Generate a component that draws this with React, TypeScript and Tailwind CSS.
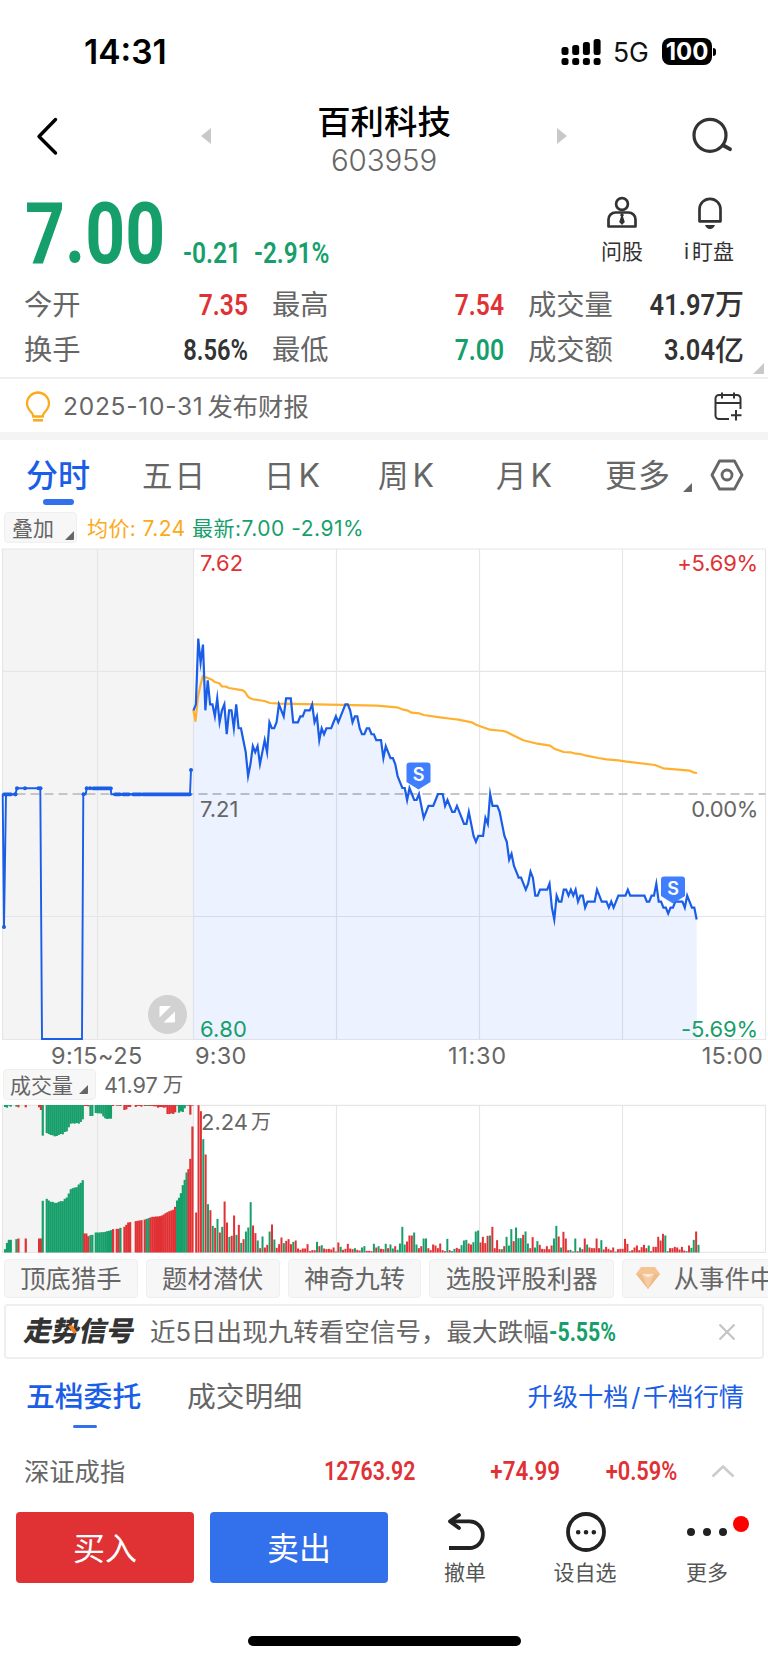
import type { ReactNode } from "react";
import clsx from "clsx";

// One value per minute, in ticks of 0.01 away from the previous close (7.21)
const TICKS = [
  14, 15, 26, 22, 25, 14, 19, 15, 15, 13, 16, 12, 14, 15, 10, 14, 14, 11, 15, 11,
  11, 9, 7, 3, 5, 8, 7, 8, 5, 7, 9, 7, 12, 11, 11, 12, 15, 14, 13, 16,
  16, 16, 12, 12, 12, 13, 13, 14, 14, 14, 15, 12, 13, 9, 11, 10, 11, 11, 11, 12,
  13, 12, 13, 14, 15, 15, 14, 12, 13, 13, 11, 10, 10, 11, 11, 10, 10, 9, 9, 9,
  6, 8, 7, 6, 6, 5, 3, 2, 1, 1, -1, 1, 0, -1, -1, 0, -2, -4, -3, -2,
  -2, -2, -1, 0, 0, 0, -2, -1, -2, -3, -3, -2, -3, -4, -5, -5, -3, -5, -7, -8,
  -7, -7, -7, -4, -5, 0, -2, -2, -2, -3, -5, -7, -8, -11, -10, -12, -13, -14, -14, -15,
  -16, -15, -13, -14, -17, -17, -16, -16, -16, -16, -15, -19, -21, -17, -18, -18, -16, -16, -17, -16,
  -17, -16, -18, -17, -17, -19, -18, -18, -18, -18, -16, -17, -18, -18, -18, -19, -18, -19, -18, -17,
  -17, -17, -17, -16, -17, -17, -17, -17, -17, -17, -17, -18, -18, -17, -17, -15, -18, -18, -19, -19,
  -20, -19, -19, -18, -18, -18, -18, -19, -17, -18, -19, -19, -21,
];

// Positive = red bar, negative = green bar
const VOLUME = [
  120, 442, 424, -340, 294, -145, 127, -80, 74, -101, 60, -77, 153, 90, -47, 50, 111, -53, 83, -29,
  40, -63, -75, -151, 81, 58, -36, 13, -48, 15, 23, -63, 84, -39, 14, 25, 45, -28, 35, 40,
  25, -32, 36, 12, 8, 12, 12, 25, 4, 7, 7, -32, 19, -22, 12, 10, 11, 9, 15, -3,
  30, -17, 8, 11, 26, 12, 10, -13, 8, 6, -15, -19, 5, 5, 4, -26, 15, -19, 11, 10,
  -26, 13, -24, -12, 19, -8, -27, -77, -24, 33, 51, 51, -60, -24, 13, 19, -42, -42, 13, 7,
  24, 21, 13, 27, 7, 4, -41, 7, -4, -11, 14, 11, -22, -36, -38, 27, 24, -31, -63, -66,
  30, 47, 28, 50, -51, 77, 13, 37, 10, -10, 19, -47, -21, -70, 34, -75, -43, -43, 53, -63,
  -27, 13, 46, -15, -34, 23, 11, 10, 19, 10, 21, -42, -80, 48, -15, 62, 42, 7, -8, 3,
  -42, 4, -15, 10, 42, -24, 15, 13, 13, 42, 13, -37, 9, 17, 11, 7, 15, -3, 10, 11,
  11, 41, 26, -4, 7, 15, 21, 7, 16, 23, 13, -21, 4, 17, 17, 47, 36, 56, -51, -4,
  13, 13, 17, 15, 9, 17, 6, -4, 21, -14, -38, 63, -23,
];

const AVERAGE =
  "193.3,162 195.5,173 198,148.7 200.3,138 202.7,128 205,129 212,131.7 214.7,134 219.3,135.3 221.7,138.3 226.3,138.7 229,140 243,142.3 245.3,144.3 247.7,148.3 250.3,150.3 253.3,151.3 264.3,153 270,155 280,155.7 376.7,157.7 396.7,159.3 402.3,161.3 407,162.3 411.7,164.7 419,165.3 423.7,167 440,169.3 453,171 458.3,171.7 471.7,174.3 476,176.7 490,181.7 503.3,183 506.7,184 523.3,192.3 537.3,195.7 550,197.7 554.3,200.7 563.7,204 570.7,204.3 575.7,205.7 580,206 585,207.3 598.3,210 606.7,211.3 618.3,212.3 626.7,213.7 655,217 663.3,220.3 690,222.7 694.3,224.7 697,225";

type AuctionRun = { x: number; up: boolean; bid: number[]; rest: number[] };

// Call auction bars: `bid` grows from the bottom, `rest` hangs from the top
const AUCTION: AuctionRun[] = [
  { x: 15, up: false, bid: [10, 29, 38, 38], rest: [6, 8, 2, 5] },
  { x: 49, up: false, bid: [40], rest: [5] },
  { x: 55, up: true, bid: [42], rest: [7] },
  { x: 77, up: true, bid: [42], rest: [7] },
  { x: 117, up: true, bid: [42, 42], rest: [7, 15] },
  { x: 128, up: false, bid: [155], rest: [92] },
  {
    x: 140,
    up: false,
    bid: [161, 156, 152, 152, 149, 149, 152, 154, 154, 161, 165, 177, 190, 193, 195, 196, 204, 209, 217],
    rest: [84, 87, 90, 91, 94, 93, 90, 87, 88, 81, 79, 67, 56, 55, 56, 54, 56, 51, 43],
  },
  { x: 253, up: true, bid: [57, 57, 49], rest: [3, 3, 4] },
  { x: 271, up: false, bid: [52, 53], rest: [33, 33] },
  { x: 287, up: false, bid: [60, 60, 60, 61, 61, 62, 64, 65, 67], rest: [24, 25, 25, 26, 34, 40, 42, 41, 41] },
  { x: 339, up: true, bid: [70], rest: [3] },
  { x: 350, up: true, bid: [71, 71], rest: [2, 2] },
  { x: 361, up: false, bid: [74], rest: [3] },
  { x: 373, up: true, bid: [77, 83, 90, 91], rest: [15, 13, 6, 6] },
  { x: 407, up: true, bid: [94, 95, 96, 97], rest: [6, 3, 3, 5] },
  { x: 434, up: true, bid: [99], rest: [3] },
  { x: 440, up: false, bid: [101, 103], rest: [3, 3] },
  {
    x: 451,
    up: true,
    bid: [105, 107, 107, 108, 108, 109, 111, 114, 118, 121, 124, 126, 128, 137],
    rest: [3, 3, 4, 4, 8, 6, 6, 8, 7, 27, 27, 25, 27, 22],
  },
  { x: 531, up: false, bid: [156, 164, 178, 202, 218, 240], rest: [2, 23, 19, 21, 10, 2] },
  { x: 565, up: true, bid: [250, 281], rest: [2, 29] },
  { x: 577, up: true, bid: [378], rest: [2] },
];

const RED = "#e03135";
const GREEN = "#179f6b";
const STEP = 572 / 241;
const minuteX = (i: number) => 193.5 + i * STEP;

const pricePoints = TICKS.map((t, i) => `${minuteX(i).toFixed(2)},${(246 - t * 5.977).toFixed(2)}`).join(" ");

function Num({ children, className }: { children: ReactNode; className?: string }) {
  return (
    <span className={clsx("inline-block whitespace-nowrap font-[Roboto,sans-serif] leading-none", className)}>
      {children}
    </span>
  );
}

function Corner({ className }: { className?: string }) {
  return (
    <svg className={clsx("shrink-0", className)} viewBox="0 0 10 10" preserveAspectRatio="none">
      <path d="M10 0v9a1 1 0 0 1-1 1H0Z" fill="currentColor" />
    </svg>
  );
}

function StatusBar() {
  return (
    <div className="flex h-[102px] items-center pt-[1px] pr-[52px] pl-[84px]">
      <span className="pt-[2px] text-[33.500px] font-semibold leading-none text-black">14:31</span>
      <svg className="ml-auto h-[28px] w-[40px]" viewBox="0 0 40 28">
        {[9, 7, 4, 1].map((top, i) => (
          <g key={i}>
            <rect x={0.5 + i * 10.7} y={top} width="7" height={17 - top} rx="2.5" />
            <rect x={0.5 + i * 10.7} y="20" width="7" height="7" rx="2.5" />
          </g>
        ))}
      </svg>
      <span className="ml-[12px] w-[38px] pt-[2px] text-[26.500px] leading-none text-[#111]">5G</span>
      <div className="ml-[11px] flex h-[27px] w-[50px] items-center justify-center rounded-[8px] bg-black text-[24px] font-bold leading-none text-white">
        100
      </div>
      <span className="ml-[1px] h-[8px] w-[3px] rounded-r-full bg-black" />
    </div>
  );
}

function Header() {
  return (
    <div className="flex h-[78px] items-start">
      <svg className="mt-[15px] ml-[35px] h-[39px] w-[24px]" viewBox="0 0 24 39" fill="none">
        <path d="M20.5 2.5 4 19.5l16.500 16.500" stroke="#000" strokeWidth="3.4" strokeLinecap="round" strokeLinejoin="round" />
      </svg>
      <svg className="mt-[26px] ml-[142px] h-[16px] w-[10px]" viewBox="0 0 10 16">
        <path d="M10 0v16L0 8Z" fill="#c8c8c8" />
      </svg>
      <div className="ml-[77px] flex w-[192px] flex-col items-center">
        <h1 className="mt-[1px] text-[33.400px] font-medium leading-[38px] text-black">百利科技</h1>
        <span className="text-[29.5px] font-light leading-[38px] tracking-[-0.1px] text-[#666]">603959</span>
      </div>
      <svg className="mt-[26px] ml-[77px] h-[16px] w-[10px]" viewBox="0 0 10 16">
        <path d="M0 0v16l10-8Z" fill="#c8c8c8" />
      </svg>
      <svg className="mt-[14px] ml-[124px] h-[42px] w-[42px]" viewBox="0 0 42 42" fill="none" stroke="#333" strokeWidth="3.2">
        <circle cx="19" cy="19.300" r="16" />
        <path d="M32.500 29.500 39 33.200" strokeWidth="3.800" strokeLinecap="round" />
      </svg>
    </div>
  );
}

function Quote() {
  return (
    <div className="flex h-[102px] items-start pl-[25px] text-[#179f6b]">
      <div className="w-[158px] pt-[11px]">
        <Num className="origin-left scale-x-[0.81] text-[86px] font-bold">7.00</Num>
      </div>
      <div className="w-[71px] pt-[58px]">
        <Num className="origin-left scale-x-[0.82] text-[30px] font-semibold">-0.21</Num>
      </div>
      <div className="pt-[58px]">
        <Num className="origin-left scale-x-[0.81] text-[30px] font-semibold">-2.91%</Num>
      </div>
      <div className="mr-[34px] ml-auto flex gap-[40px] text-[#333]">
        <div className="flex w-[44px] flex-col items-center pt-[16px]">
          <svg className="h-[34px] w-[32px]" viewBox="0 0 32 34" fill="none" stroke="#333" strokeWidth="2.700">
            <circle cx="16" cy="8" r="5.900" />
            <path d="M2.500 30.500v-7a7 7 0 0 1 7-7h13a7 7 0 0 1 7 7v7Z" strokeLinejoin="round" />
            <path d="m16 17 2 2-1 1.500 1.800 5.500L16 29l-2.800-3 1.800-5.500-1-1.500Z" fill="#333" stroke="none" />
          </svg>
          <span className="mt-[10px] whitespace-nowrap text-[21px] leading-[24px]">问股</span>
        </div>
        <div className="flex w-[50px] flex-col items-center pt-[16px]">
          <svg className="ml-[2px] h-[34px] w-[26px]" viewBox="0 0 26 34" fill="none" stroke="#333" strokeWidth="2.700">
            <path d="M2.500 25.300v-12a10.500 10.500 0 0 1 21 0v12Z" strokeLinejoin="round" />
            <path d="M8 29h10q-1.500 4-5 4t-5-4Z" fill="#333" stroke="none" />
          </svg>
          <span className="mt-[10px] whitespace-nowrap text-[21px] leading-[24px]">
            <span className="mr-[3px]">i</span>盯盘
          </span>
        </div>
      </div>
    </div>
  );
}

type StatProps = { label: string; value: string; unit?: string; color: string; squeeze?: string };

function Stat({ label, value, unit, color, squeeze = "scale-x-[0.82]" }: StatProps) {
  return (
    <div className="flex items-center justify-between">
      <span className="text-[28.300px] leading-none text-[#666]">{label}</span>
      <span className={clsx("flex items-center", color)}>
        <Num className={clsx("origin-right text-[30px] font-semibold", squeeze)}>{value}</Num>
        {unit && <span className="text-[29px] font-medium leading-none">{unit}</span>}
      </span>
    </div>
  );
}

function Stats() {
  return (
    <div className="flex h-[97px] border-b-2 border-[#efefef]">
      <div className="ml-[24px] grid h-[92px] w-[720px] grid-cols-[224px_232px_216px] content-start justify-between">
        <div className="grid auto-rows-[45.500px]">
          <Stat label="今开" value="7.35" color="text-[#e03135]" />
          <Stat label="换手" value="8.56%" color="text-[#333]" squeeze="scale-x-[0.79]" />
        </div>
        <div className="grid auto-rows-[45.500px]">
          <Stat label="最高" value="7.54" color="text-[#e03135]" />
          <Stat label="最低" value="7.00" color="text-[#179f6b]" />
        </div>
        <div className="grid auto-rows-[45.500px]">
          <Stat label="成交量" value="41.97" unit="万" color="text-[#333]" squeeze="scale-x-[0.85]" />
          <Stat label="成交额" value="3.04" unit="亿" color="text-[#333]" squeeze="scale-x-[0.85]" />
        </div>
      </div>
      <Corner className="mt-[81px] ml-[9px] h-[11px] w-[11px] text-[#c8c8c8]" />
    </div>
  );
}

function Notice() {
  return (
    <div className="flex h-[61px] items-center border-b-8 border-[#f4f4f4] pt-[2px] text-[#666]">
      <svg className="ml-[24px] h-[32px] w-[28px]" viewBox="0 0 28 32" fill="none" stroke="#fbaa1c" strokeWidth="2.300">
        <path d="M9 25.500v-1.500c0-2.500-6-5-6-11.500a11 11 0 0 1 22 0c0 6.500-6 9-6 11.500v1.500Z" strokeLinejoin="round" />
        <path d="M9 29.300h10" strokeWidth="2.600" />
      </svg>
      <span className="ml-[11px] text-[24.500px] leading-none tracking-[0.750px]">2025-10-31</span>
      <span className="ml-[4px] text-[25.300px] leading-none">发布财报</span>
      <svg className="mr-[25px] ml-auto h-[32px] w-[30px]" viewBox="0 0 30 32" fill="none" stroke="#333" strokeWidth="2">
        <path d="M16 28H6a3.500 3.500 0 0 1-3.500-3.500V7.500A3.500 3.500 0 0 1 6 4h18a3.500 3.500 0 0 1 3.500 3.500V18M2.500 12h25M9 1.500v6M21 1.500v6M18 24.300h10.500M23 19v10.500" />
      </svg>
    </div>
  );
}

const PERIODS = [
  { label: "日", width: "w-[114px]" },
  { label: "周", width: "w-[118px]" },
  { label: "月", width: "w-[109px]" },
];

function PeriodTabs() {
  return (
    <div className="flex h-[70px] items-start pt-[17px] text-[30.500px] leading-[38px] text-[#666]">
      <div className="ml-[26px] flex w-[116px] flex-col font-medium text-[#1a5de6]">
        <span className="text-[32px]">分时</span>
        <span className="mt-[4px] ml-[17px] h-[6px] w-[31px] rounded-full bg-[#3370eb]" />
      </div>
      <span className="w-[122px] tracking-[2px]">五日</span>
      {PERIODS.map(({ label, width }) => (
        <span key={label} className={width}>
          {label}
          <span className="ml-[4px] text-[32px]">K</span>
        </span>
      ))}
      <span className="w-[78px] text-[32px] tracking-[1px]">更多</span>
      <Corner className="mt-[26px] h-[9px] w-[9px]" />
      <svg className="mt-[2px] ml-[18px] h-[32px] w-[34px]" viewBox="0 0 34 32" fill="none" stroke="#666" strokeWidth="2.800">
        <path d="M9.500 2h15L32 16l-7.500 14h-15L2 16Z" strokeLinejoin="round" />
        <circle cx="17" cy="16" r="5" />
      </svg>
    </div>
  );
}

function Legend() {
  return (
    <div className="flex h-[38px] items-start text-[21px] leading-[32px]">
      <div className="mt-[2px] ml-[4px] flex h-[31px] w-[73px] rounded-[4px] border border-[#efefef] bg-[#f7f7f7] pl-[7px] text-[#666]">
        叠加
        <Corner className="mt-[18px] ml-[11px] h-[9px] w-[9px]" />
      </div>
      <span className="mt-[3px] ml-[10px] w-[105px] whitespace-nowrap tracking-[0.400px] text-[#fbaa1c]">均价: 7.24</span>
      <span className="mt-[3px] whitespace-nowrap tracking-[0.500px] text-[#179f6b]">最新:7.00 -2.91%</span>
    </div>
  );
}

function Marker({ x, y }: { x: number; y: number }) {
  return (
    <g transform={`translate(${x} ${y})`}>
      <path d="M-9 0H9a3 3 0 0 1 3 3V19.500L0 27-12 19.500V3a3 3 0 0 1 3-3Z" fill="#3f7fff" />
      <text y="18" textAnchor="middle" fontSize="18" fontWeight="600" fill="#fff" fontFamily="Inter, sans-serif">
        S
      </text>
    </g>
  );
}

function PriceChart() {
  return (
    <div className="relative h-[493px] text-[22px] leading-none">
      <svg className="block h-[493px] w-[768px]" viewBox="0 0 768 493" fill="none">
        <rect x="2.500" y="1" width="191" height="490.500" fill="#f4f4f4" />
        <g stroke="#e6e6e6" strokeWidth="1.200">
          <path d="M2.500 1H765.500V491.500H2.500ZM97.500 1V491.500M193.500 1V491.500M336.500 1V491.500M479.500 1V491.500M622.500 1V491.500M2.500 123.300H765.500M2.500 368.500H765.500" />
        </g>
        <path d="M2.500 246H765.500" stroke="#c4c6ca" strokeWidth="1.800" strokeDasharray="9 5" />
        <polygon points={`193.500,491.500 ${pricePoints} 697,491.500`} fill="#2b6bff" fillOpacity="0.09" />
        <polyline points={AVERAGE} stroke="#ffb02e" strokeWidth="2.200" strokeLinejoin="round" />
        <g stroke="#1a5de6" strokeWidth="2.200">
          <polyline points={pricePoints} strokeMiterlimit="10" />
          <polyline points="2.700,246.300 4,379 6,246.300 15.300,246.300 17,240.300 40.300,240.300 42,491 82,491 83.300,246.300 85.700,246.300 86.700,240.300 110.700,240.300 111.300,246.300 190,246.300 191,222" strokeWidth="1.900" />
          <path d="M4 246.300H11M15 246.300h.5M93 240.300H111M115 246.300H120M123 246.300H129M133 246.300H141M143 246.300H190" strokeWidth="3.800" strokeLinecap="round" />
        </g>
        <g fill="#1a5de6">
          {["4,379", "15.5,246.3", "17,240.3", "25,240.3", "38.5,240.3", "40.5,240.3", "83.5,246.3", "86.7,240.3", "90,240.3", "191,222"].map((p) => {
            const [cx, cy] = p.split(",");
            return <circle key={p} cx={cx} cy={cy} r="2" />;
          })}
        </g>
        <Marker x={418.500} y={214.500} />
        <Marker x={673} y={328.500} />
        <circle cx="167.500" cy="466.500" r="19.500" fill="#d2d2d2" />
        <path d="M160.500 458H171L159.500 469.500V459a1 1 0 0 1 1-1ZM175 463.500V473a1.500 1.500 0 0 1-1.500 1.500H163.500Z" fill="#fff" />
      </svg>
      <div className="absolute top-[4px] left-[200px] tracking-[0.200px] text-[#e03135]">7.62</div>
      <div className="absolute top-[250px] left-[200px] text-[#666]">7.21</div>
      <div className="absolute top-[470px] left-[200px] tracking-[0.200px] text-[#179f6b]">6.80</div>
      <div className="absolute top-[4px] right-[10px] tracking-[-0.200px] text-[#e03135]">+5.69%</div>
      <div className="absolute top-[250px] right-[10px] tracking-[-0.350px] text-[#666]">0.00%</div>
      <div className="absolute top-[470px] right-[10px] tracking-[-0.100px] text-[#179f6b]">-5.69%</div>
    </div>
  );
}

function TimeAxis() {
  return (
    <div className="flex h-[28px] text-[23.500px] leading-[29px] text-[#666]">
      <span className="ml-[51px] w-[144px] tracking-[0.450px]">9:15~25</span>
      <span className="w-[253px] tracking-[0.200px]">9:30</span>
      <span className="tracking-[0.700px]">11:30</span>
      <span className="mr-[5px] ml-auto tracking-[0.200px]">15:00</span>
    </div>
  );
}

function VolumeLabel() {
  return (
    <div className="flex h-[35px] items-start text-[21px] leading-[32px] text-[#666]">
      <div className="ml-[3px] flex h-[31px] w-[93px] shrink-0 rounded-[4px] border border-[#efefef] bg-[#f7f7f7] pl-[6px] leading-[31px]">
        成交量
        <Corner className="mt-[15px] ml-[6px] h-[9px] w-[9px]" />
      </div>
      <span className="ml-[8px] text-[21.700px]">41.97</span>
      <span className="ml-[5px] text-[20.500px]">万</span>
    </div>
  );
}

function VolumeChart() {
  return (
    <div className="relative h-[149px]">
      <svg className="block h-[149px] w-[768px]" viewBox="0 0 768 149" fill="none">
        <rect x="2.500" y="1.300" width="191" height="147" fill="#f4f4f4" />
        <path
          d="M2.500 1.300H765.500V148.300H2.500ZM97.500 1.300V148.300M193.500 1.300V148.300M336.500 1.300V148.300M479.500 1.300V148.300M622.500 1.300V148.300"
          stroke="#e6e6e6"
          strokeWidth="1.200"
        />
        {AUCTION.map((run) => (
          <g key={run.x} fill={run.up ? RED : GREEN}>
            {run.bid.map((bid, i) => {
              const x = (run.x - 3 + i * (run.bid.length > 15 ? 6 : 5.7)) / 3;
              return (
                <g key={i}>
                  <rect x={x} y={148.5 - bid / 3} width="2.200" height={bid / 3} />
                  <rect x={x} y="1" width="2.200" height={run.rest[i] / 3} />
                </g>
              );
            })}
          </g>
        ))}
        {VOLUME.map((v, i) => (
          <rect
            key={i}
            x={minuteX(i + 1) - 0.7 - i * 0.004}
            y={148.5 - Math.abs(v) / 3}
            width="2"
            height={Math.abs(v) / 3}
            fill={v > 0 ? RED : GREEN}
          />
        ))}
      </svg>
      <div className="absolute top-[6px] left-[201px] flex text-[22px] leading-[24px] text-[#666]">
        2.24<span className="ml-[3px] text-[20px]">万</span>
      </div>
    </div>
  );
}

const CHIPS = ["顶底猎手", "题材潜伏", "神奇九转", "选股评股利器"];

function Chips() {
  return (
    <div className="mt-[2px] flex h-[49px] gap-[8px] overflow-hidden pt-[4px] pl-[4px] text-[25.300px] leading-[37px] text-[#666]">
      {CHIPS.map((chip) => (
        <span
          key={chip}
          className="h-[39px] shrink-0 rounded-[4px] border border-[#efefef] bg-[#f7f7f7] px-[15.300px] whitespace-nowrap"
        >
          {chip}
        </span>
      ))}
      <span className="flex h-[39px] w-[200px] shrink-0 rounded-[4px] border border-[#efefef] bg-[#f7f7f7] pl-[13px] whitespace-nowrap">
        <svg className="mt-[7px] mr-[14px] h-[22px] w-[24px]" viewBox="0 0 24 22">
          <path d="M5 0h14l5 7-12 15L0 7Z" fill="#f6c492" />
          <path d="M0 7h24L12 22Z" fill="#efbd8c" />
          <path d="M6 7h12l-6 15Z" fill="#f6cda3" />
          <path d="m6 7 6 3.500L18 7Z" fill="#fdebd8" />
        </svg>
        从事件中
      </span>
    </div>
  );
}

function SignalBanner() {
  return (
    <div className="mx-[4px] flex h-[55px] items-center rounded-[4px] border-2 border-[#efefef] pl-[19px]">
      <div className="relative w-[112px] pt-[2px]">
        <span className="inline-block -skew-x-12 text-[27.500px] font-black leading-none text-[#333]">走势信号</span>
        <svg className="absolute top-[9px] left-[43px] h-[9px] w-[9px]" viewBox="0 0 9 9">
          <path d="M0 1 4 0 9 7 6 9Z" fill="#f5821f" />
        </svg>
      </div>
      <span className="ml-[13px] whitespace-nowrap text-[25.550px] leading-none text-[#666]">
        近5日出现九转看空信号，最大跌幅
      </span>
      <Num className="origin-left scale-x-[0.82] text-[26px] font-bold text-[#179f6b]">-5.55%</Num>
      <svg className="mr-[26px] ml-auto h-[18px] w-[18px]" viewBox="0 0 18 18">
        <path d="m1.500 1.500 15 15M16.500 1.500l-15 15" stroke="#c4c4c4" strokeWidth="2.200" />
      </svg>
    </div>
  );
}

function OrderTabs() {
  return (
    <div className="flex h-[77px] items-start pt-[19px] leading-[38px]">
      <div className="ml-[26px] flex w-[161px] flex-col text-[28.800px] font-medium text-[#1a5de6]">
        五档委托
        <span className="mt-[9px] ml-[47px] h-[3px] w-[24px] rounded-full bg-[#3370eb]" />
      </div>
      <span className="text-[28.800px] text-[#666]">成交明细</span>
      <span className="mr-[24px] ml-auto text-[25.300px] text-[#1a5de6]">
        升级十档<span className="mx-[2.500px]">/</span>千档行情
      </span>
    </div>
  );
}

function IndexRow() {
  return (
    <div className="flex h-[76px] items-center pb-[5px] text-[#e03135]">
      <span className="ml-[24px] w-[141px] text-[25.300px] leading-none text-[#666]">深证成指</span>
      <div className="w-[250px] text-right">
        <Num className="origin-right scale-x-[0.82] text-[26px] font-semibold">12763.92</Num>
      </div>
      <div className="w-[145px] text-right">
        <Num className="origin-right scale-x-[0.86] text-[26px] font-semibold">+74.99</Num>
      </div>
      <div className="w-[117px] text-right">
        <Num className="origin-right scale-x-[0.84] text-[26px] font-semibold">+0.59%</Num>
      </div>
      <svg className="mt-[-2px] ml-[34px] h-[14px] w-[24px]" viewBox="0 0 24 14" fill="none">
        <path d="m1.500 12.500 10.500-10 10.500 10" stroke="#ccc" strokeWidth="2.600" />
      </svg>
    </div>
  );
}

function BottomBar() {
  return (
    <div className="flex h-[124px] items-start pl-[16px] text-[#222]">
      <button className="h-[71px] w-[178px] rounded-[4px] bg-[#e03135] pt-[3px] text-[32px] leading-none text-white">买入</button>
      <button className="ml-[16px] h-[71px] w-[178px] rounded-[4px] bg-[#3370eb] pt-[3px] text-[32px] leading-none text-white">卖出</button>
      <div className="ml-[46px] flex w-[62px] flex-col items-center">
        <svg className="ml-[3px] h-[40px] w-[42px]" viewBox="0 0 42 40" fill="none" stroke="#222" strokeWidth="3.800">
          <path d="M3 36h20.500a13.300 13.300 0 0 0 0-26.600H4" strokeLinejoin="round" />
          <path d="M13 3 4 9.400 13 16" strokeLinecap="round" strokeLinejoin="round" />
        </svg>
        <span className="mt-[8px] text-[21px] leading-[26px] text-[#555]">撤单</span>
      </div>
      <div className="ml-[54px] flex w-[70px] flex-col items-center">
        <svg className="ml-[2px] h-[40px] w-[40px]" viewBox="0 0 40 40" fill="none">
          <circle cx="20" cy="20" r="18" stroke="#222" strokeWidth="3.800" />
          <path d="M12.200 20.300h.01M20 20.300h.01M27.800 20.300h.01" stroke="#222" strokeWidth="4.600" strokeLinecap="round" />
        </svg>
        <span className="mt-[8px] whitespace-nowrap text-[21px] leading-[26px] text-[#555]">设自选</span>
      </div>
      <div className="relative ml-[54px] flex w-[66px] flex-col items-center">
        <svg className="h-[40px] w-[42px]" viewBox="0 0 42 40">
          <path d="M5 20h.01M21 20h.01M37 20h.01" stroke="#222" strokeWidth="8" strokeLinecap="round" />
        </svg>
        <span className="mt-[8px] text-[21px] leading-[26px] text-[#555]">更多</span>
        <span className="absolute top-[4px] left-[59px] size-[16px] rounded-full bg-[#ff0000]" />
      </div>
    </div>
  );
}

export default function App() {
  return (
    <div className="flex h-[1663px] w-[768px] flex-col overflow-hidden bg-white font-[Inter,'Noto_Sans_CJK_SC',sans-serif] *:shrink-0">
      <StatusBar />
      <Header />
      <Quote />
      <Stats />
      <Notice />
      <PeriodTabs />
      <Legend />
      <PriceChart />
      <TimeAxis />
      <VolumeLabel />
      <VolumeChart />
      <Chips />
      <SignalBanner />
      <OrderTabs />
      <IndexRow />
      <BottomBar />
      <div className="ml-[248px] h-[10px] w-[273px] rounded-full bg-black" />
    </div>
  );
}
